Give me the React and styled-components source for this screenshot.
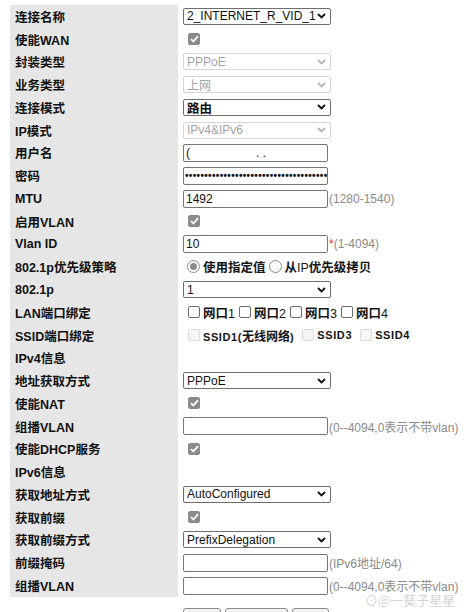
import React from "react";
import styled, { createGlobalStyle } from "styled-components";

const Global = createGlobalStyle`
  html, body { margin: 0; padding: 0; background: #fff; }
  body { font-family: "Liberation Sans", "Noto Sans CJK SC", sans-serif; color: #111; overflow: hidden; }
`;

const Page = styled.div`
  position: relative;
  padding: 5px 0 0 10px;
  width: 465px;
  height: 607px;
  overflow: hidden;
`;

const Form = styled.div`
  display: grid;
  grid-template-columns: 168px 1fr;
  column-gap: 5px;
  grid-auto-rows: 22.77px;
`;

const Label = styled.div`
  background: #e6e6e6;
  padding-left: 5px;
  display: flex;
  align-items: center;
  font-size: 12.5px;
  font-weight: 700;
  color: #111;
  white-space: nowrap;
`;

const Value = styled.div`
  display: flex;
  align-items: center;
  font-size: 12px;
  white-space: nowrap;
`;

const SelectBox = styled.div`
  box-sizing: border-box;
  width: 148px;
  height: 17px;
  border: 1px solid ${(p) => (p.$disabled ? "#d6d6d6" : "#6e6e6e")};
  border-radius: 2px;
  display: flex;
  align-items: center;
  padding: 0 4px 0 3px;
  color: ${(p) => (p.$disabled ? "#a3a3a3" : "#111")};
  font-size: ${(p) => (p.$bold ? "12.5px" : "12px")};
  font-weight: ${(p) => (p.$bold ? 700 : 400)};
  background: #fff;
`;

const SelectText = styled.span`
  flex: 1;
  overflow: hidden;
  white-space: nowrap;
`;

const TextInput = styled.div`
  position: relative;
  box-sizing: border-box;
  width: 145px;
  height: 18px;
  border: 1px solid #767676;
  border-radius: 2px;
  display: flex;
  align-items: center;
  padding: 0 2px;
  font-size: 12px;
  color: #111;
  overflow: hidden;
  background: #fff;
`;

const Cover = styled.span`
  position: absolute;
  top: -1px;
  height: 10px;
  background: #fff;
`;

const Dots = styled.span`
  letter-spacing: 0.35px;
  font-size: 10px;
  font-weight: 700;
  line-height: 1;
  margin-left: -1px;
`;

const Hint = styled.span`
  color: #8a8a8a;
  font-size: 12px;
  margin-left: 1px;
`;

const Star = styled.span`
  color: #e03030;
  font-size: 12px;
  margin-left: 1px;
`;

const Check = styled.span`
  box-sizing: border-box;
  width: 12px;
  height: 12px;
  margin-left: ${(p) => (p.$first ? "5px" : "4px")};
  margin-right: 3px;
  border-radius: 2px;
  display: inline-flex;
  align-items: center;
  justify-content: center;
  flex-shrink: 0;
  background: ${(p) => (p.$checked ? "#8a8a8a" : p.$disabled ? "#f5f5f5" : "#fff")};
  border: 1px solid ${(p) => (p.$checked ? "#8a8a8a" : p.$disabled ? "#dadada" : "#6a6a6a")};
`;

const Radio = styled.span`
  box-sizing: border-box;
  width: 13px;
  height: 13px;
  border-radius: 50%;
  border: 1px solid #8a8a8a;
  display: inline-flex;
  align-items: center;
  justify-content: center;
  margin-left: ${(p) => (p.$first ? "4px" : "3px")};
  margin-right: 3px;
  background: #fff;
  &::after {
    content: "";
    display: ${(p) => (p.$checked ? "block" : "none")};
    width: 7px;
    height: 7px;
    border-radius: 50%;
    background: #8a8a8a;
  }
`;

const OptText = styled.span`
  font-size: 12.5px;
  font-weight: 700;
  color: #151515;
`;

const SsidText = styled.span`
  font-size: 11px;
  font-weight: 700;
  color: #151515;
  letter-spacing: 0.6px;
  margin-right: ${(p) => p.$mr || 0}px;
`;

const Cjk = styled.span`
  font-weight: 700;
  letter-spacing: 0;
  font-size: 12px;
`;

const Light = styled.span`
  font-weight: 400;
`;

const Buttons = styled.div`
  display: flex;
  gap: 4px;
  margin: 11px 0 0 173px;
`;

const Button = styled.div`
  box-sizing: border-box;
  width: ${(p) => p.$w}px;
  height: 22px;
  border: 1px solid #8a8a8a;
  border-radius: 3px;
  background: #f2f2f2;
  font-size: 12px;
  display: flex;
  align-items: center;
  justify-content: center;
`;

const Watermark = styled.div`
  position: absolute;
  left: 365px;
  top: 590px;
  font-size: 13px;
  color: rgba(140, 140, 140, 0.4);
  font-family: "Noto Sans CJK SC", sans-serif;
  white-space: nowrap;
  pointer-events: none;
`;

const Chevron = ({ disabled }) => (
  <svg width="9" height="6" viewBox="0 0 9 6" style={{ flexShrink: 0, marginLeft: 1 }}>
    <path d="M1 1 L4.5 4.5 L8 1" fill="none" stroke={disabled ? "#b5b5b5" : "#111"} strokeWidth="1.8" />
  </svg>
);

const Tick = () => (
  <svg width="9" height="8" viewBox="0 0 9 8">
    <path d="M1 4.2 L3.4 6.5 L8 1.2" fill="none" stroke="#fff" strokeWidth="1.8" />
  </svg>
);

const Select = ({ text, disabled, bold }) => (
  <SelectBox $disabled={disabled} $bold={bold}>
    <SelectText>{text}</SelectText>
    <Chevron disabled={disabled} />
  </SelectBox>
);

const CheckBox = ({ checked, disabled, first }) => (
  <Check $checked={checked} $disabled={disabled} $first={first}>
    {checked && <Tick />}
  </Check>
);

const rows = [
  ["连接名称", <Select text="2_INTERNET_R_VID_10" />],
  ["使能WAN", <CheckBox checked first />],
  ["封装类型", <Select text="PPPoE" disabled />],
  ["业务类型", <Select text="上网" disabled />],
  ["连接模式", <Select text="路由" bold />],
  ["IP模式", <Select text="IPv4&IPv6" disabled />],
  [
    "用户名",
    <TextInput>
      (<span style={{ marginLeft: 66 }}>. .</span>
      <Cover style={{ left: 6, width: 36 }} />
      <Cover style={{ left: 58, width: 16 }} />
    </TextInput>,
  ],
  ["密码", <TextInput><Dots>{"•".repeat(44)}</Dots></TextInput>],
  ["MTU", <><TextInput>1492</TextInput><Hint>(1280-1540)</Hint></>],
  ["启用VLAN", <CheckBox checked first />],
  ["Vlan ID", <><TextInput>10</TextInput><Star>*</Star><Hint style={{ marginLeft: 0 }}>(1-4094)</Hint></>],
  [
    "802.1p优先级策略",
    <>
      <Radio $checked $first />
      <OptText>使用指定值</OptText>
      <Radio />
      <OptText>从<Light>IP</Light>优先级拷贝</OptText>
    </>,
  ],
  ["802.1p", <Select text="1" />],
  [
    "LAN端口绑定",
    <>
      {[1, 2, 3, 4].map((n) => (
        <React.Fragment key={n}>
          <CheckBox first={n === 1} />
          <OptText>网口<Light>{n}</Light></OptText>
        </React.Fragment>
      ))}
    </>,
  ],
  [
    "SSID端口绑定",
    <>
      <CheckBox disabled first />
      <SsidText $mr={4}>SSID1(<Cjk>无线网络</Cjk>)</SsidText>
      <CheckBox disabled />
      <SsidText $mr={4}>SSID3</SsidText>
      <CheckBox disabled />
      <SsidText>SSID4</SsidText>
    </>,
  ],
  ["IPv4信息", null],
  ["地址获取方式", <Select text="PPPoE" />],
  ["使能NAT", <CheckBox checked first />],
  ["组播VLAN", <><TextInput /><Hint>(0--4094,0表示不带vlan)</Hint></>],
  ["使能DHCP服务", <CheckBox checked first />],
  ["IPv6信息", null],
  ["获取地址方式", <Select text="AutoConfigured" />],
  ["获取前缀", <CheckBox checked first />],
  ["获取前缀方式", <Select text="PrefixDelegation" />],
  ["前缀掩码", <><TextInput /><Hint>(IPv6地址/64)</Hint></>],
  ["组播VLAN", <><TextInput /><Hint>(0--4094,0表示不带vlan)</Hint></>],
];

export default function App() {
  return (
    <>
      <Global />
      <Page>
        <Form>
          {rows.map(([label, value], i) => (
            <React.Fragment key={i}>
              <Label>{label}</Label>
              <Value>{value}</Value>
            </React.Fragment>
          ))}
        </Form>
        <Buttons>
          <Button $w={38}>确定</Button>
          <Button $w={63}>删除连接</Button>
          <Button $w={37}>取消</Button>
        </Buttons>
        <Watermark>⊙@一葵子星星</Watermark>
      </Page>
    </>
  );
}
